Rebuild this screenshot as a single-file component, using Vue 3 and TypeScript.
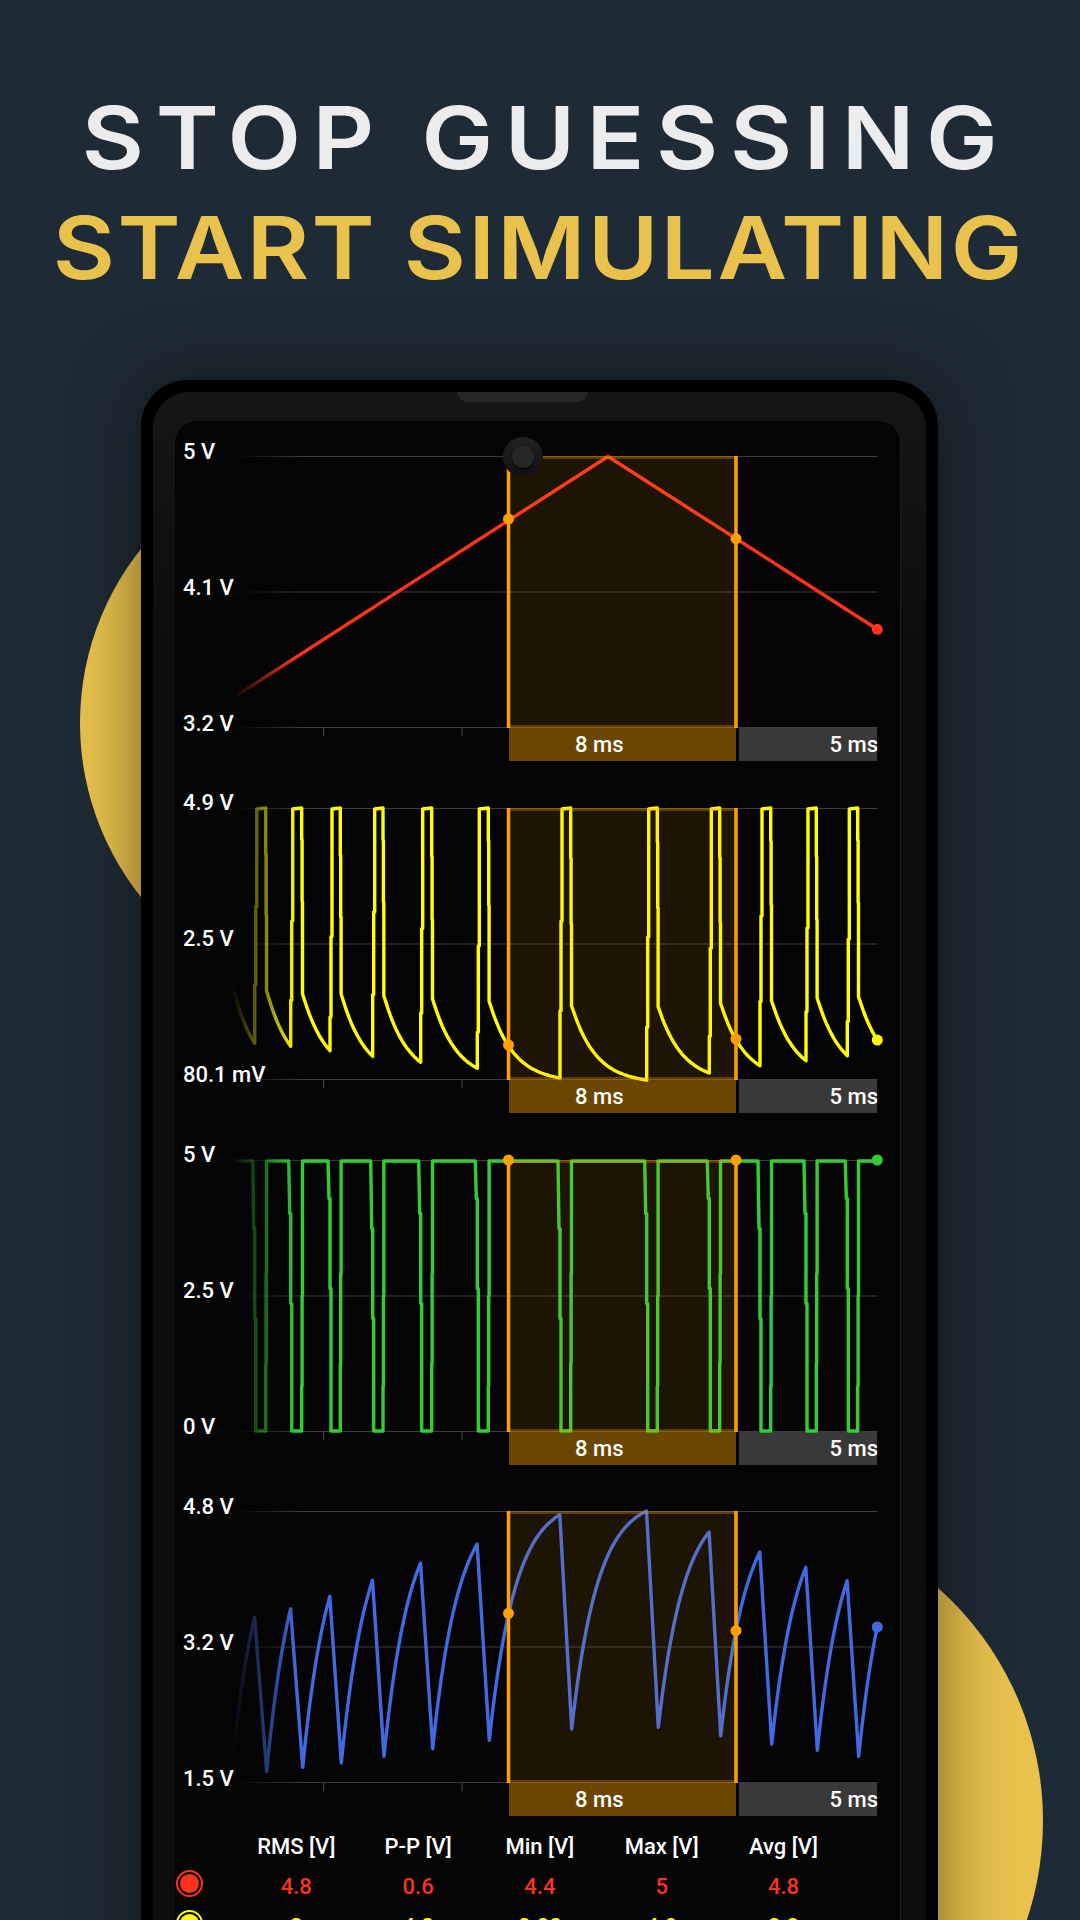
<template>
  <div class="page">
    <div class="blob blob-left"></div>
    <div class="blob blob-right"></div>

    <h1 class="title">
      <span class="line line-top">STOP GUESSING</span>
      <span class="line line-bottom">START SIMULATING</span>
    </h1>

    <div class="phone">
      <div class="bezel">
        <div class="speaker"></div>
        <div class="camera"><div class="lens"></div></div>

        <div class="screen">
          <div class="charts">
            <div v-for="chart in charts" :key="chart.id" class="chart">
              <div class="axis">
                <span v-for="label in chart.labels" :key="label">{{ label }}</span>
              </div>

              <svg class="plot" width="726" height="272" viewBox="175 0 726 272">
                <defs>
                  <linearGradient :id="'fade-' + chart.id" gradientUnits="userSpaceOnUse" x1="232" y1="0" x2="296" y2="0">
                    <stop offset="0" :stop-color="chart.color" stop-opacity="0" />
                    <stop offset="1" :stop-color="chart.color" stop-opacity="1" />
                  </linearGradient>
                  <linearGradient :id="'grid-' + chart.id" gradientUnits="userSpaceOnUse" x1="236" y1="0" x2="300" y2="0">
                    <stop offset="0" stop-color="#3c3c3c" stop-opacity="0" />
                    <stop offset="1" stop-color="#3c3c3c" stop-opacity="1" />
                  </linearGradient>
                </defs>

                <line v-for="y in [0.5, 136, 271.5]" :key="y" x1="236" x2="877.5" :y1="y" :y2="y"
                  :stroke="'url(#grid-' + chart.id + ')'" stroke-width="1" />
                <line v-for="x in ticks" :key="x" :x1="x" :x2="x" y1="272" y2="280" class="tick" />

                <path :d="chart.path" fill="none" :stroke="'url(#fade-' + chart.id + ')'" stroke-width="3.4" stroke-linejoin="round" />

                <rect :x="SEL_LEFT" y="0" :width="SEL_RIGHT - SEL_LEFT" height="272" class="sel-fill" />
                <rect :x="SEL_LEFT" y="0" :width="SEL_RIGHT - SEL_LEFT" height="3" class="sel-edge" />
                <rect :x="SEL_LEFT" y="269" :width="SEL_RIGHT - SEL_LEFT" height="3" class="sel-edge" />
                <line :x1="SEL_LEFT" :x2="SEL_LEFT" y1="0" y2="272" class="sel-line" />
                <line :x1="SEL_RIGHT" :x2="SEL_RIGHT" y1="0" y2="272" class="sel-line" />

                <circle :cx="SEL_LEFT" :cy="chart.dots[0]" r="5.5" fill="#ffa000" />
                <circle :cx="SEL_RIGHT" :cy="chart.dots[1]" r="5.5" fill="#ffa000" />
                <circle cx="877.3" :cy="chart.dots[2]" r="5.5" :fill="chart.color" />
              </svg>

              <div class="bars">
                <div class="bar bar-sel">8 ms</div>
                <div class="bar bar-rest"><span class="over">5 ms</span></div>
              </div>
            </div>
          </div>

          <div class="stats">
            <div></div>
            <div v-for="head in statHeads" :key="head" class="cell">{{ head }}</div>
            <template v-for="row in statRows" :key="row.color">
              <div class="radio" :style="{ color: row.color }"><i></i></div>
              <div v-for="(val, i) in row.values" :key="i" class="cell" :style="{ color: row.text }">{{ val }}</div>
            </template>
          </div>
        </div>
      </div>
    </div>
  </div>
</template>

<script setup lang="ts">
const SEL_LEFT = 508.5;
const SEL_RIGHT = 736;
const END_X = 877.3;

const ticks = [323.7, 462, 600];

// switching edges of the simulated signal, page x
const rises = [254.7, 290.7, 330, 372.7, 420.7, 477.3, 560, 646.7, 709.3, 760, 806, 847.3];
const falls = [266.7, 302.7, 341.3, 384, 432.7, 489.3, 571.7, 658.3, 720.7, 771.7, 817.3, 858.7];

// yellow: end of each decay and start of the next one
const capLow = [235.3, 238.3, 242.7, 248.3, 254.3, 260.3, 270, 272, 265, 257.7, 252.7, 247.7];
const capStart = [182.7, 186, 186, 187.7, 191, 193.3, 197.7, 198.7, 195.3, 192.7, 190, 188.7];

// blue: peak and trough of each cycle
const bluePeak = [106.3, 98, 85.3, 69.3, 52, 33, 3.7, 0, 21, 41, 56.3, 69.7];
const blueLow = [260.3, 256.3, 252, 245.3, 237.7, 229.3, 218, 216.3, 224.7, 233, 239.3, 245.3];

function expSeg(x0: number, y0: number, x1: number, y1: number, tau: number) {
  const pts: string[] = [];
  const total = 1 - Math.exp(-(x1 - x0) / tau);
  for (let x = x0 + 2; x < x1; x += 2) {
    const f = (1 - Math.exp(-(x - x0) / tau)) / total;
    pts.push(`L${x.toFixed(1)} ${(y0 + (y1 - y0) * f).toFixed(1)}`);
  }
  pts.push(`L${x1} ${y1}`);
  return pts.join(' ');
}

// steep edge with the small stair steps of the sampled trace
function edge(x: number, from: number, to: number, lean: number, phase: number) {
  const n = 3;
  const span = to - from;
  const pts: string[] = [];
  for (let i = 1; i <= n; i++) {
    const y = from + span * Math.min(1, (i - 0.25 - phase * 0.5) / n);
    const a = x + (lean * (i - 1)) / (n - 1);
    pts.push(`L${a.toFixed(1)} ${y.toFixed(1)}`);
    if (i < n) pts.push(`L${(x + (lean * i) / (n - 1)).toFixed(1)} ${y.toFixed(1)}`);
  }
  pts.push(`L${(x + lean).toFixed(1)} ${to}`);
  return pts.join(' ');
}

function capPath() {
  let d = `M232 176 ` + expSeg(232, 176, rises[0], capLow[0], 24);
  rises.forEach((r, i) => {
    d += ' ' + edge(r, capLow[i], 1, 2, (i % 3) / 3);
    d += ` L${falls[i] - 1} 0`;
    d += ' ' + edge(falls[i] - 1, 1, capStart[i], 0.8, (i % 2) / 2);
    d += ' ' + expSeg(falls[i], capStart[i], i < 11 ? rises[i + 1] : END_X, i < 11 ? capLow[i + 1] : 232, 24);
  });
  return d;
}

function squarePath() {
  let d = `M232 1 L${rises[0] - 2} 1`;
  rises.forEach((r, i) => {
    d += ' ' + edge(r - 1, 1, 271, 2, (i % 3) / 3);
    d += ` L${falls[i] - 1} 271`;
    d += ' ' + edge(falls[i] - 1, 271, 1, 0.8, (i % 2) / 2);
    d += ` L${i < 11 ? rises[i + 1] - 2 : END_X} 1`;
  });
  return d;
}

function wavePath() {
  let d = `M232 256 ` + expSeg(232, 256, rises[0] - 0.2, bluePeak[0], 26);
  rises.forEach((r, i) => {
    d += ` L${falls[i]} ${blueLow[i]}`;
    d += ' ' + expSeg(falls[i], blueLow[i], i < 11 ? rises[i + 1] - 0.2 : END_X, i < 11 ? bluePeak[i + 1] : 115.7, 26);
  });
  return d;
}

const charts = [
  {
    id: 'red',
    color: '#ff3319',
    labels: ['5 V', '4.1 V', '3.2 V'],
    path: 'M236.7 239.3 L608 0.5 L877.3 173.3',
    dots: [63, 82.6, 173.3],
  },
  {
    id: 'yellow',
    color: '#ffff00',
    labels: ['4.9 V', '2.5 V', '80.1 mV'],
    path: capPath(),
    dots: [237, 231, 232],
  },
  {
    id: 'green',
    color: '#32cd32',
    labels: ['5 V', '2.5 V', '0 V'],
    path: squarePath(),
    dots: [0, 0, 0],
  },
  {
    id: 'blue',
    color: '#4169e1',
    labels: ['4.8 V', '3.2 V', '1.5 V'],
    path: wavePath(),
    dots: [102.3, 119.7, 116],
  },
];

const statHeads = ['RMS [V]', 'P-P [V]', 'Min [V]', 'Max [V]', 'Avg [V]'];
const statRows = [
  { color: '#ff3319', text: '#ff3319', values: ['4.8', '0.6', '4.4', '5', '4.8'] },
  { color: '#ffff00', text: '#ffff00', values: ['3', '4.8', '0.08', '4.9', '2.2'] },
];
</script>

<style>
html,
body {
  margin: 0;
  background: #1e2a35;
}
</style>

<style scoped>
.page {
  position: relative;
  width: 1080px;
  height: 1920px;
  overflow: hidden;
  background: #1e2a35;
}

.blob {
  position: absolute;
  border-radius: 50%;
  background: #e8c24c;
}

.blob-left {
  left: 80px;
  top: 444px;
  width: 558px;
  height: 558px;
}

.blob-right {
  left: 421px;
  top: 1510px;
  width: 622px;
  height: 622px;
}

.title {
  position: relative;
  margin: 0;
  padding-top: 83px;
  display: flex;
  flex-direction: column;
  align-items: center;
  font-family: Inter, "Open Sans", sans-serif;
  font-weight: 560;
  font-size: 87px;
  line-height: 110px;
}

.line {
  display: block;
  white-space: nowrap;
  transform: scaleX(1.1);
}

.line-top {
  color: #ececec;
  letter-spacing: 10.5px;
  margin-right: -10.5px;
}

.line-bottom {
  color: #e8c24c;
  letter-spacing: 2.2px;
  margin-right: 2px;
}

.phone {
  position: relative;
  width: 797px;
  margin: 77px 0 0 141px;
  padding: 12px 0 0 12px;
  box-sizing: border-box;
  height: 1700px;
  background: #000;
  border-radius: 46px 46px 0 0;
  box-shadow: 0 0 70px rgba(0, 0, 0, 0.5);
}

.bezel {
  position: relative;
  width: 773px;
  height: 1700px;
  padding: 29px 0 0 22px;
  box-sizing: border-box;
  background: linear-gradient(#161616, #0d0d0d 240px);
  border-radius: 36px 36px 0 0;
}

.speaker {
  position: absolute;
  top: 0;
  left: 304px;
  width: 131px;
  height: 10px;
  border-radius: 0 0 10px 10px;
  background: #262626;
}

.camera {
  position: absolute;
  z-index: 2;
  left: 350px;
  top: 45px;
  width: 40px;
  height: 40px;
  border-radius: 50%;
  background: linear-gradient(#222224, #111113);
  display: flex;
  align-items: center;
  justify-content: center;
}

.lens {
  width: 22px;
  height: 22px;
  border-radius: 50%;
  background: #272727;
  box-shadow: 0 2px 2px rgba(0, 0, 0, 0.7);
}

.screen {
  width: 726px;
  height: 1700px;
  padding-top: 35px;
  box-sizing: border-box;
  background: #040404;
  border-radius: 22px 22px 0 0;
  border-right: 1px solid #1c1c1c;
  font-family: Roboto, sans-serif;
  font-weight: 500;
  font-size: 22px;
  color: #fff;
}

.charts {
  display: flex;
  flex-direction: column;
  gap: 46.8px;
}

.chart {
  position: relative;
  height: 305px;
}

.axis {
  position: absolute;
  top: -17.5px;
  left: 8px;
  height: 298px;
  display: flex;
  flex-direction: column;
  justify-content: space-between;
  line-height: 26px;
}

.plot {
  position: relative;
  z-index: 1;
  display: block;
  overflow: visible;
}

.tick {
  stroke: #4a4a4a;
  stroke-width: 1;
}

.sel-fill {
  fill: rgba(255, 160, 0, 0.105);
}

.sel-edge {
  fill: rgba(255, 160, 0, 0.3);
}

.sel-line {
  stroke: #ffa000;
  stroke-width: 3.5;
}

.bars {
  display: flex;
  gap: 3px;
  margin-left: 334px;
  height: 33px;
}

.bar {
  display: flex;
  align-items: center;
  box-sizing: border-box;
  white-space: nowrap;
}

.bar-sel {
  width: 227px;
  padding-left: 66px;
  background: #6a4600;
}

.bar-rest {
  width: 138px;
  justify-content: flex-end;
  background: #393939;
}

.over {
  margin-right: -1px;
}

.stats {
  display: grid;
  grid-template-columns: 60.4px repeat(5, 121.8px);
  grid-auto-rows: 40px;
  align-items: center;
  margin-top: 10px;
}

.cell {
  text-align: center;
}

.radio {
  box-sizing: border-box;
  width: 27px;
  height: 27px;
  margin: -5px 0 0 1px;
  border: 2px solid currentColor;
  border-radius: 50%;
  display: flex;
  align-items: center;
  justify-content: center;
}

.radio i {
  width: 19px;
  height: 19px;
  border-radius: 50%;
  background: currentColor;
}
</style>
